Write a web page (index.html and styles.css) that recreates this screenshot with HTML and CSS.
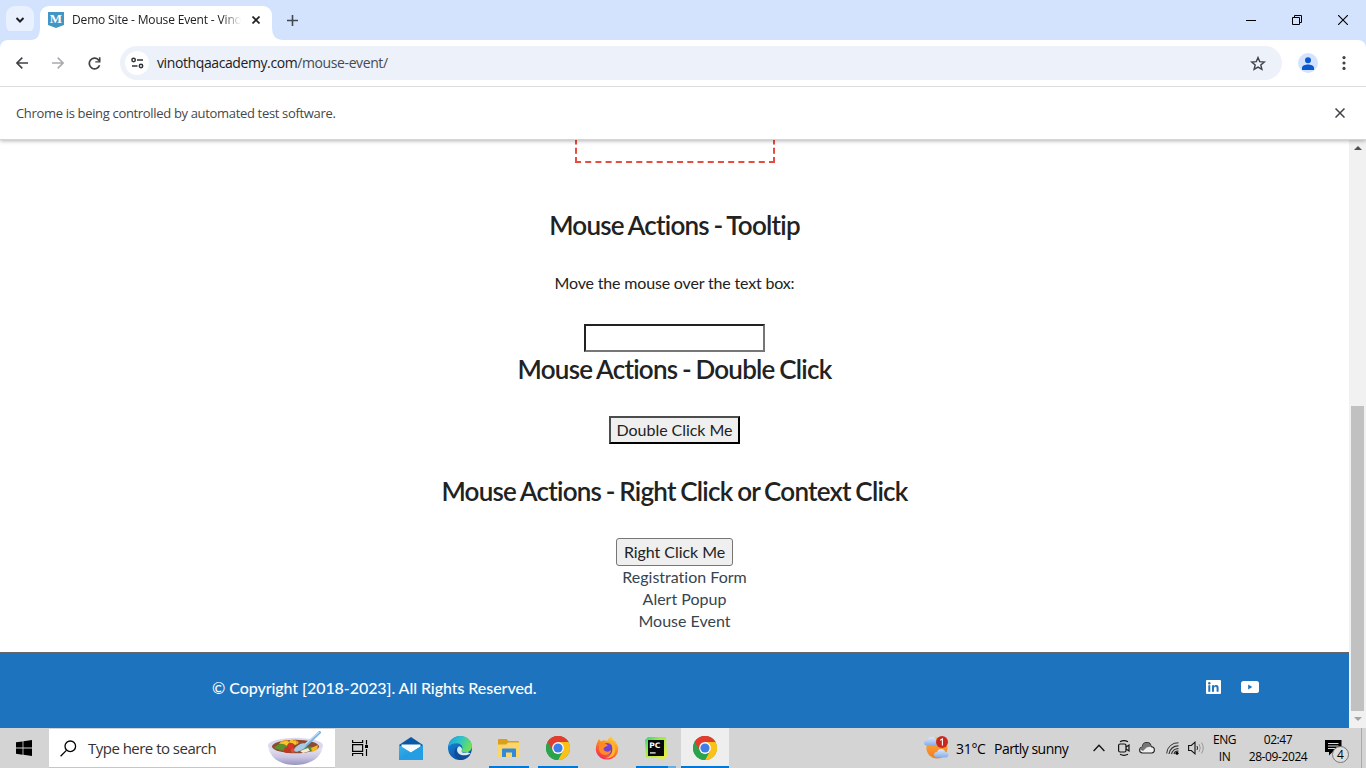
FILE: index.html
```html
<!DOCTYPE html>
<html lang="en">
<head>
<meta charset="utf-8">
<title>Demo Site - Mouse Event</title>
<link rel="stylesheet" href="styles.css">
</head>
<body>
<svg class="defs" width="0" height="0">
  <defs>
    <linearGradient id="edgeA" x1="0" y1="0" x2="1" y2="0.4"><stop offset="0" stop-color="#1b9de2"/><stop offset=".5" stop-color="#2cc3c9"/><stop offset="1" stop-color="#6be05a"/></linearGradient>
    <linearGradient id="edgeB" x1="0" y1="0" x2="0.6" y2="1"><stop offset="0" stop-color="#1a8fe0"/><stop offset="1" stop-color="#0c4a9e"/></linearGradient>
    <linearGradient id="fox" x1="0.8" y1="0" x2="0.3" y2="1"><stop offset="0" stop-color="#ffdf3c"/><stop offset=".45" stop-color="#ff8a1e"/><stop offset="1" stop-color="#f5275a"/></linearGradient>
    <linearGradient id="sun" x1="0" y1="0" x2="0" y2="1"><stop offset="0" stop-color="#fbb03b"/><stop offset="1" stop-color="#f47b20"/></linearGradient>
    <linearGradient id="cloud" x1="0" y1="0" x2="0" y2="1"><stop offset="0" stop-color="#dce9fb"/><stop offset="1" stop-color="#85aee8"/></linearGradient>
    <linearGradient id="bowl" x1="0" y1="0" x2="0" y2="1"><stop offset="0" stop-color="#f1effa"/><stop offset=".6" stop-color="#cbc6e2"/><stop offset="1" stop-color="#9992c0"/></linearGradient>
    <linearGradient id="mailb" x1="0" y1="0" x2="1" y2="1"><stop offset="0" stop-color="#35b5ee"/><stop offset="1" stop-color="#1683d2"/></linearGradient>
    <linearGradient id="pc" x1="0" y1="0" x2="1" y2="1"><stop offset="0" stop-color="#1fda86"/><stop offset=".35" stop-color="#9ae84a"/><stop offset="1" stop-color="#f4f03a"/></linearGradient>
    <symbol id="chrome" viewBox="0 0 24 24">
      <circle cx="12" cy="12" r="12" fill="#34a853"/>
      <path d="M12 12 1.6 6A12 12 0 0 1 22.4 6z" fill="#e33b2e"/>
      <path d="M22.4 6A12 12 0 0 1 12 24l5-9.300L12 6z" fill="#fbc116"/>
      <path d="M1.600 6 7 15.200 12 12V6H22.400A12 12 0 0 0 1.600 6z" fill="#e33b2e"/>
      <path d="M1.600 6A12 12 0 0 0 12 24l5-9L12 12 6.700 14.800z" fill="#2ba24c"/>
      <circle cx="12" cy="12" r="5.900" fill="#fff"/><circle cx="12" cy="12" r="4.600" fill="#3f7ee8"/>
    </symbol>
  </defs>
</svg>
<div class="screen">
  <header class="tabstrip">
    <button class="tab-search"><svg width="10" height="8" viewBox="0 0 10 8"><path d="M1.500 2 5 5.500 8.500 2" fill="none" stroke="#202124" stroke-width="2"/></svg></button>
    <div class="tab">
      <svg class="curve curve-left" width="8" height="12" viewBox="0 0 8 12"><path d="M8 0v12H0Q8 11 8 0z" fill="#fff"/></svg>
      <span class="favicon">M</span>
      <span class="tab-title">Demo Site - Mouse Event - Vino</span>
      <svg class="tab-close" width="8" height="8" viewBox="0 0 8 8"><path d="M.5.500l7 7m0-7-7 7" stroke="#202124" stroke-width="1.700"/></svg>
      <svg class="curve curve-right" width="10" height="12" viewBox="0 0 10 12"><path d="M0 0v12H10Q0 11 0 0z" fill="#fff"/></svg>
    </div>
    <svg class="new-tab" width="11" height="11" viewBox="0 0 11 11"><path d="M5.500 0v11M0 5.500h11" stroke="#43474e" stroke-width="1.600"/></svg>
    <div class="window-controls">
      <svg width="10" height="10" viewBox="0 0 10 10"><path d="M0 5.500h10" stroke="#000"/></svg>
      <svg width="10" height="10" viewBox="0 0 10 10"><path d="M.5 2.500h7v7h-7zM2.500 2.500v-2h7v7h-2" fill="none" stroke="#000"/></svg>
      <svg width="10" height="10" viewBox="0 0 10 10"><path d="M0 0l10 10M10 0 0 10" stroke="#000" stroke-width="1.100"/></svg>
    </div>
  </header>
  <nav class="toolbar">
    <div class="nav-icons">
      <svg width="12" height="12" viewBox="0 0 12 12"><path d="M12 6H1M6.300.6.900 6l5.400 5.400" fill="none" stroke="#3f4247" stroke-width="1.600"/></svg>
      <svg width="12" height="12" viewBox="0 0 12 12"><path d="M0 6h11M5.700.6 11.100 6l-5.400 5.400" fill="none" stroke="#a9abae" stroke-width="1.600"/></svg>
      <svg width="13" height="13" viewBox="0 0 13 13"><path d="M11.600 8.300A5.300 5.300 0 1 1 10.400 2.800L11.700 4.300" fill="none" stroke="#3f4247" stroke-width="1.700"/><path d="M12.500.3v5.200H7.300V4.200h3.600V.3z" fill="#3f4247"/></svg>
    </div>
    <div class="omnibox">
      <span class="site-info"><svg width="13" height="12" viewBox="0 0 13 12"><g fill="none" stroke="#303338" stroke-width="1.500"><circle cx="2.600" cy="3" r="1.700"/><path d="M6 3h6M1 9h5.500"/><circle cx="10" cy="9" r="1.700"/></g></svg></span>
      <span class="url">vinothqaacademy.com<span class="path">/mouse-event/</span></span>
      <svg class="star" width="16" height="15" viewBox="0 0 16 15"><path d="M8 1.600 9.700 5.600 14.300 6 10.800 9 11.900 13.400 8 11.100 4.100 13.400 5.200 9 1.700 6 6.300 5.600z" fill="none" stroke="#3f4247" stroke-width="1.400"/></svg>
    </div>
    <span class="avatar"><svg width="12" height="13" viewBox="0 0 12 13"><circle cx="6" cy="3.200" r="3" fill="#0b57d0"/><path d="M0 13v-2C0 8.500 3.500 7.600 6 7.600s6 .9 6 3.400v2z" fill="#0b57d0"/></svg></span>
    <svg class="menu" width="4" height="14" viewBox="0 0 4 14" fill="#3f4247"><circle cx="2" cy="1.600" r="1.600"/><circle cx="2" cy="7" r="1.600"/><circle cx="2" cy="12.400" r="1.600"/></svg>
  </nav>
  <div class="infobar">
    <span class="infobar-text">Chrome is being controlled by automated test software.</span>
    <svg width="10" height="10" viewBox="0 0 10 10"><path d="M.5.500l9 9m0-9-9 9" stroke="#3f4247" stroke-width="1.500"/></svg>
  </div>
  <div class="viewport">
    <div class="page">
      <main class="content">
        <div class="dropzone"></div>
        <h2 class="heading heading-tooltip">Mouse Actions - Tooltip</h2>
        <p class="prompt">Move the mouse over the text box:</p>
        <input class="tip-input" type="text">
        <h2 class="heading heading-double">Mouse Actions - Double Click</h2>
        <button class="double-btn">Double Click Me</button>
        <h2 class="heading heading-right">Mouse Actions - Right Click or Context Click</h2>
        <button class="right-btn">Right Click Me</button>
        <ul class="links"><li>Registration Form</li><li>Alert Popup</li><li>Mouse Event</li></ul>
      </main>
      <footer class="footer">
        <span class="copyright">© Copyright [2018-2023]. All Rights Reserved.</span>
        <div class="social">
          <svg width="15" height="14" viewBox="0 0 15 14"><rect width="15" height="14" rx="1" fill="#fff"/><g fill="#1e73be"><rect x="2.300" y="5.200" width="2" height="6.600"/><circle cx="3.300" cy="3.200" r="1.200"/><path d="M6 5.200h2v.9c.5-.7 1.100-1.100 2.100-1.100 1.900 0 2.500 1.200 2.500 2.900v3.900h-2V8.300c0-.9-.2-1.600-1.100-1.600S8 7.300 8 8.300v3.500H6z"/></g></svg>
          <svg width="18" height="12" viewBox="0 0 18 12"><rect width="18" height="12" rx="2.500" fill="#fff"/><path d="M7.200 3.600v4.800L11.300 6z" fill="#1e73be"/></svg>
        </div>
      </footer>
    </div>
    <div class="scrollbar">
      <svg class="up" width="8" height="4" viewBox="0 0 8 4"><path d="M4 0 8 4H0z" fill="#505050"/></svg>
      <div class="thumb"></div>
      <svg class="down" width="8" height="4" viewBox="0 0 8 4"><path d="M4 4 8 0H0z" fill="#a3a3a3"/></svg>
    </div>
  </div>
  <div class="taskbar">
    <div class="start"><svg width="16" height="16" viewBox="0 0 16 16"><path d="M0 2.300 6.600 1.400V7.600H0zM7.400 1.300 16 0v7.600H7.400zM0 8.400h6.600v6.300L0 13.800zM7.400 8.400H16V16l-8.600-1.200z"/></svg></div>
    <div class="search">
      <svg width="17" height="17" viewBox="0 0 17 17"><circle cx="10.300" cy="6.300" r="5.300" fill="none" stroke="#000" stroke-width="1.300"/><path d="M6.400 10.400.6 16.200" stroke="#000" stroke-width="1.300"/></svg>
      <span class="search-text">Type here to search</span>
      <svg class="soup" width="57" height="35" viewBox="0 0 57 35">
        <path d="M1 14C2 26 12 34 28 34S55 26 56 14z" fill="url(#bowl)"/><ellipse cx="28.500" cy="14.500" rx="27.500" ry="7.700" fill="#dcd7ed"/>
        <ellipse cx="28.500" cy="15.500" rx="23.500" ry="6.800" fill="#8e4b2f"/>
        <path d="M7 17q5-6 11-3l5 4q-5 4-16-1z" fill="#55942d"/><path d="M33 20q6-7 14-3-4 5-14 3z" fill="#479034"/>
        <path d="M12 13q5-7 10-2 2-5 8-1 4 2-2 4-6-5-8 1-4-3-8-2z" fill="#f6c42d"/><path d="M15 11q5-4 8 1m3-2q4-2 4 3" stroke="#de8b17" fill="none"/>
        <circle cx="24" cy="15" r="3" fill="#d93528"/><circle cx="20" cy="19" r="3" fill="#c83423"/><circle cx="26" cy="19.500" r="2.300" fill="#e54934"/>
        <path d="M33 20l8-3 2 3-7 2z" fill="#fae9d7"/><path d="M44 17l7-3-1 5-5 2z" fill="#f0b827"/>
        <path d="M52.500 1.500 36 17" stroke="#7cb2df" stroke-width="3" stroke-linecap="round"/><path d="M52 1 35 16" stroke="#bddcf6" stroke-width="1.500"/><ellipse cx="33" cy="16.500" rx="6.500" ry="3" transform="rotate(-30 33 16.500)" fill="#a9cae9"/>
      </svg>
    </div>
    <div class="task"><svg width="17" height="16" viewBox="0 0 17 16"><g fill="none" stroke="#000" stroke-width="1.200"><path d="M.6 0v2.500h10V0M.6 16v-2.500h10V16M.6 4.700h10v6.600H.6zM14.500 0v4.500M14.500 9v7"/></g><rect x="13" y="5" width="3" height="3"/></svg></div>
    <div class="apps">
      <div class="app"><svg width="24" height="23" viewBox="0 0 24 23"><path d="M0 8 12 0 24 8v8H0z" fill="#0a58a8"/><path d="M2.500 7.500h19V14L12 18 2.500 14z" fill="#f8fbfd"/><path d="M0 8l12 7.500L24 8v15H0z" fill="url(#mailb)"/><path d="M0 23 24 8v15z" fill="#249de2"/></svg></div>
      <div class="app"><svg width="24" height="24" viewBox="0 0 24 24"><circle cx="12" cy="12" r="12" fill="url(#edgeB)"/><path d="M.3 11C1.300 4 6.500 0 12.400 0 19 0 24 4.700 24 10c0 4-3 6.500-6.500 6.500-3 0-4.300-1-3.600-2.300 2-4-1.300-7-5-7C5 7.200 1.500 8.500.3 11z" fill="url(#edgeA)"/><path d="M8.700 13.600c-.7 5.400 6.200 9.200 13.600 4.600-1.500 3-5.500 5.800-10.300 5.800C6 22 3.500 14.500 10.500 10c-1.200 1.200-1.700 2.200-1.800 3.600z" fill="#104d9b"/><path d="M11.100 10.300c3.600.9 3 3.800 2.600 4.600-.5 1.400 1.800 2.500 6 1.300l3 1.200c-7 4-13.200.8-13.600-3-.2-2 .8-3.300 2-4.100z" fill="#dce9ee"/></svg></div>
      <div class="app running"><svg width="22" height="20" viewBox="0 0 22 20"><path d="M0 2Q0 1 1 1h7.500l2 2H20q1 0 1 1v3H0z" fill="#dc9f17"/><path d="M0 6.500h8L10 4.500H22V18q0 1-1 1H0z" fill="#fbd66c"/><path d="M4 11.500Q4 10.500 5 10.500H17q1 0 1 1V19h-4v-4.500H8V19H4z" fill="#3189d7"/></svg></div>
      <div class="app running"><svg width="24" height="24"><use href="#chrome"/></svg></div>
      <div class="app"><svg width="24" height="24" viewBox="0 0 24 24"><path d="M2 7 4 3l2 2.500C8 4 11 4 12.500 5 13 2.500 15 1 17 0q0 3 2 4.500 2 .5 2.500 3Q24 11 23 15.500C21.500 21 17 23.500 12 23.500 5.500 23.500.8 18.500.8 13Q.8 10 2 7z" fill="url(#fox)"/><circle cx="12" cy="13" r="6" fill="#7141d6"/><path d="M4 8q3-2.500 7 0l2 1.500-3 1.500q-3 2 0 4c3 1.500 5 0 6-1q0 5-6 5C3 18 4 12 4 8z" fill="#ff8b25"/><path d="M16 6q7 5 3 13c-2 2-5 4-9 3 7-1 9-7 6-16z" fill="#ffb628"/></svg></div>
      <div class="app running split"><svg width="22" height="22" viewBox="0 0 22 22"><path d="M0 3 3 0h18l1 19-3 3L1 20z" fill="url(#pc)"/><rect x="3" y="3" width="16" height="16" fill="#080808"/><text x="4.300" y="10.800" class="pc-text">PC</text><rect x="5" y="15.300" width="5.600" height="1.200" fill="#fff"/></svg></div>
      <div class="app running active"><svg width="24" height="24"><use href="#chrome"/></svg></div>
    </div>
    <div class="weather">
      <svg width="25" height="24" viewBox="0 0 25 24"><circle cx="13" cy="12" r="10.600" fill="url(#sun)"/><path d="M3 9.500q-3 0-3-2.500t3-2.600Q4 1 8 1t4.500 3.500q2.500.5 2.500 2.700T12.500 9.500z" fill="url(#cloud)"/><path d="M13 21.500q-3 0-3-2.700t3-2.800q1-3 4.200-3t4.200 3q3 .3 3 2.800t-3 2.700z" fill="url(#cloud)"/><circle cx="18" cy="6" r="6" fill="#c92a20"/><path d="M16.200 4.200 18.400 3v6.500" fill="none" stroke="#fff" stroke-width="1.100"/></svg>
      <span class="temp">31°C</span><span class="cond">Partly sunny</span>
    </div>
    <div class="tray">
      <svg class="chevron" width="12" height="8" viewBox="0 0 12 8"><path d="M.6 7 6 1.300 11.400 7" fill="none" stroke="#111" stroke-width="1.300"/></svg>
      <svg width="12" height="16" viewBox="0 0 12 16"><g fill="none" stroke="#111" stroke-width="1.200"><rect x=".6" y="4" width="7.400" height="8" rx="1.500"/><path d="M8 7l3-2v6L8 9M2 1.700Q6-.3 10 1.700M2 14.300q4 2 8 0"/></g></svg>
      <svg width="16" height="12" viewBox="0 0 16 12"><path d="M3.500 11Q.6 10.700 .6 8T3.200 5.200Q4 .6 7.700.6t4.500 4q3.200.4 3.200 3.300t-2.700 3.100z" fill="#eee" stroke="#222" stroke-width="1.100"/><path d="M1 7.500Q1.500 5 3.200 5.200 4 .8 7.700.8t4.300 3.800L7.500 5.500 4 9z" fill="#777"/></svg>
      <svg class="wifi" width="13" height="13" viewBox="0 0 13 13"><g fill="none" stroke="#333"><path d="M.7 11.500A11 11 0 0 1 12.500 .8"/><path d="M3 12A9 9 0 0 1 12.500 3.800M5.500 12A6.800 6.800 0 0 1 12.500 6.700M8 12A4 4 0 0 1 12.500 9.200" stroke-width="1.200"/></g><circle cx="11" cy="11.200" r="1.500"/></svg>
      <svg width="17" height="14" viewBox="0 0 17 14"><path d="M.6 4.500h2.700L7 1.200v11.600L3.300 9.500H.6z" fill="none" stroke="#111" stroke-width="1.100"/><path d="M9 5q1 2 0 4" fill="none" stroke="#222"/><path d="M11 3q2.500 4 0 8M13.500 1.500q3.500 5.500 0 11" fill="none" stroke="#999"/></svg>
    </div>
    <div class="lang"><span>ENG</span><span>IN</span></div>
    <div class="clock"><span>02:47</span><span class="date">28-09-2024</span></div>
    <div class="notify">
      <svg width="17" height="16" viewBox="0 0 17 16"><path d="M0 0h16.500v12H7.500L4 15.500V12H0z"/><path d="M3 3.500h10.500M3 6h10.500M3 8.500h7" stroke="#ddd"/></svg>
      <span class="count">4</span>
    </div>
    <div class="peek"></div>
  </div>
</div>
</body>
</html>
```

FILE: styles.css
```css
* { box-sizing: border-box; }
body { margin: 0; background: #fff; overflow: hidden; }
svg { display: block; flex: none; }
.defs { position: absolute; }
button { font: inherit; }
.screen { width: 1366px; height: 768px; display: flex; flex-direction: column; overflow: hidden; font-family: "Open Sans", "Noto Sans", sans-serif; }

.tabstrip { height: 40px; flex: none; display: flex; align-items: center; background: #d3e3fd; padding-left: 6px; }
.tab-search { width: 28px; height: 28px; border: 0; border-radius: 9px; background: #e9f0fe; padding: 0; display: flex; align-items: center; justify-content: center; }
.tab { position: relative; width: 232px; height: 34px; margin: 6px 0 0 6px; background: #fff; border-radius: 9px 9px 0 0; display: flex; align-items: center; padding: 0 12px 6px 8px; }
.curve { position: absolute; bottom: 0; }
.curve-left { left: -8px; }
.curve-right { right: -10px; }
.favicon { width: 16px; height: 16px; background: #4196c3; color: #fff; font: bold 13px/14px "Liberation Serif", serif; text-align: center; clip-path: polygon(0 0, 100% 0, 100% 82%, 50% 100%, 0 82%); }
.tab-title { width: 174px; margin-left: 8px; white-space: nowrap; font-size: 12px; line-height: 18px; letter-spacing: -0.16px; color: #202124; -webkit-mask-image: linear-gradient(90deg, #000 150px, transparent 169px); mask-image: linear-gradient(90deg, #000 150px, transparent 169px); }
.tab-close { margin-left: auto; }
.new-tab { margin-left: 15px; }
.window-controls { display: flex; gap: 36px; margin-left: auto; padding-right: 18px; }

.toolbar { height: 47px; flex: none; display: flex; align-items: center; background: #fff; border-bottom: 1px solid #dcdedf; border-radius: 8px 8px 0 0; box-shadow: 0 -9px 0 #d3e3fd; padding: 0 20px 0 16px; }
.nav-icons { display: flex; gap: 24px; align-items: center; width: 104px; }
.omnibox { width: 1162px; height: 34px; border-radius: 17px; background: #ecf1fa; display: flex; align-items: center; padding: 0 16px 0 5px; }
.site-info { width: 24px; height: 24px; border-radius: 50%; background: #fff; display: flex; align-items: center; justify-content: center; }
.url { margin-left: 8px; padding-bottom: 1px; font-size: 14px; letter-spacing: -0.4px; color: #202124; }
.path { color: #474b50; }
.star { margin-left: auto; }
.avatar { width: 20px; height: 20px; border-radius: 50%; background: #d3e3fd; margin-left: 16px; display: flex; align-items: center; justify-content: center; }
.menu { margin-left: auto; }

.infobar { height: 53px; flex: none; display: flex; align-items: center; justify-content: space-between; padding: 0 21px 0 16px; background: #fff; border-bottom: 1px solid #d5d5d5; box-shadow: 0 1px 4px rgba(0,0,0,.3); clip-path: inset(0 0 -8px 0); z-index: 1; }
.infobar-text { font-size: 13px; letter-spacing: -0.33px; color: #474747; }

.viewport { height: 588px; flex: none; display: flex; overflow: hidden; }
.page { width: 1349px; display: flex; flex-direction: column; font-family: Lato, sans-serif; font-size: 16px; color: #222; font-variant-ligatures: none; }
.content { height: 512px; display: flex; flex-direction: column; align-items: center; }
.dropzone { width: 200px; height: 43px; margin-top: -20px; border: 2px dashed #e74c3c; flex: none; }
.heading { margin: 0; font-size: 26px; line-height: 34px; font-weight: 600; letter-spacing: -0.77px; word-spacing: -1.1px; color: #222; }
.heading-tooltip { margin-top: 45px; }
.prompt { margin: 29px 0 0; line-height: 24px; height: 24px; letter-spacing: -0.17px; }
.tip-input { width: 181px; height: 28px; margin: 29px 0 0; padding: 1px 2px; background: #fff; border: 2px solid; border-color: #222 #767676 #767676 #222; border-radius: 0; }
.heading-double { margin-top: 0; }
.double-btn { width: 131px; height: 28px; margin: 30px 0 0; padding: 1px 0; color: #222; background: #efefef; border: 2px solid; border-color: #4c4c4c #000 #000 #4c4c4c; white-space: nowrap; line-height: 22px; letter-spacing: -0.05px; }
.heading-right { margin-top: 30px; }
.right-btn { width: 117px; height: 28px; margin: 30px 0 0; padding: 1px 0; color: #222; background: #efefef; border: 1px solid #767676; border-radius: 3px; white-space: nowrap; line-height: 24px; letter-spacing: -0.05px; }
.links { list-style: none; margin: 0; padding: 0 0 0 20px; text-align: center; line-height: 22px; color: #36454f; }
.footer { height: 76px; background: #1e73be; border-top: 1px solid #666; display: flex; align-items: center; justify-content: space-between; padding: 0 90px 6px 212px; color: #fff; }
.copyright { font-weight: 500; letter-spacing: -0.06px; }
.social { display: flex; gap: 20px; align-items: center; padding-bottom: 2px; }
.scrollbar { width: 17px; background: #f1f1f1; display: flex; flex-direction: column; align-items: center; }
.up { margin-top: 6px; }
.thumb { width: 13px; height: 305px; margin: 256px 0 6px; background: #c1c1c1; }

.taskbar { height: 40px; flex: none; display: flex; align-items: center; background: #d4d4d4; color: #000; }
.start { width: 49px; padding-left: 16px; }
.search { width: 286px; height: 39px; background: #fff; border: 1px solid #c6c6c6; border-width: 0 0 1px; display: flex; align-items: center; padding: 0 11px 0 11px; margin-top: 1px; }
.search-text { margin-left: 11px; font-size: 15px; letter-spacing: -0.52px; white-space: nowrap; color: #333; }
.soup { margin-left: auto; }
.task { width: 52px; padding-left: 17px; }
.apps { display: flex; gap: 1px; align-self: stretch; }
.app { width: 48px; height: 40px; border-bottom: 2px solid transparent; display: flex; align-items: center; justify-content: center; padding-top: 2px; }
.running { background: linear-gradient(90deg, #0078d7, #0078d7) center bottom / 40px 2px no-repeat; background-origin: border-box; background-clip: border-box; }
.split { background-image: linear-gradient(90deg, #0078d7 32px, #68aee6 32px); }
.active { background-color: #eee; background-size: 48px 2px; }
.pc-text { font: bold 7.500px "DejaVu Sans", sans-serif; fill: #fff; }
.weather { width: 168px; margin-left: 195px; display: flex; align-items: center; font-size: 14px; letter-spacing: -0.3px; white-space: nowrap; }
.temp { width: 31px; margin-left: 7px; }
.cond { margin-left: 7px; letter-spacing: -0.52px; }
.tray { width: 114px; display: flex; gap: 9px; align-items: center; }
.chevron { margin: 0 4px 0 1px; }
.wifi { margin-left: 2px; }
.lang, .clock { display: flex; flex-direction: column; align-items: center; font-size: 12px; line-height: 17px; letter-spacing: -0.4px; }
.lang { width: 37px; }
.clock { width: 70px; }
.notify { position: relative; width: 25px; height: 28px; margin-left: 12px; padding-top: 6px; }
.count { position: absolute; left: 7px; top: 12px; width: 17px; height: 17px; border: 1px solid #777; border-radius: 50%; background: #ddd; font-size: 12px; line-height: 15px; text-align: center; }
.peek { height: 40px; margin-left: auto; width: 5px; border-left: 1px solid #aaa; }
```
